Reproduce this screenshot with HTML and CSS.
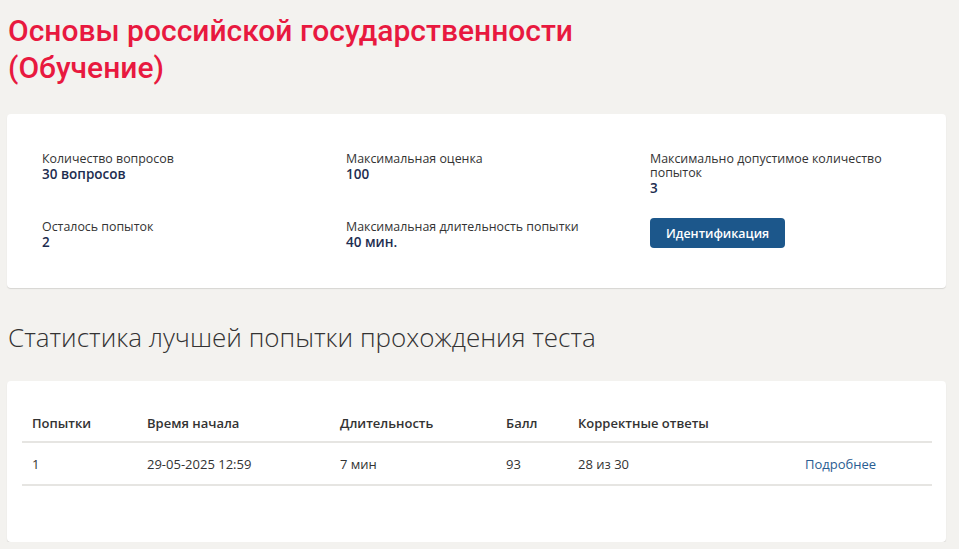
FILE: index.html
```html
<!DOCTYPE html>
<html lang="ru">
<head>
  <meta charset="UTF-8" />
  <meta name="viewport" content="width=device-width, initial-scale=1.0"/>
  <title>Основы российской государственности</title>
  <link rel="stylesheet" href="styles.css">
</head>
<body>

  <!-- Заголовок курса -->
  <h1 class="titul">Основы российской государственности<br>(Обучение)</h1>

  <!-- Параметры теста -->
  <div class="kartochka info">
    <div class="pole">
      <div class="podpis">Количество вопросов</div>
      <div class="znachenie">30 вопросов</div>
    </div>
    <div class="pole">
      <div class="podpis">Максимальная оценка</div>
      <div class="znachenie">100</div>
    </div>
    <div class="pole">
      <div class="podpis">Максимально допустимое количество попыток</div>
      <div class="znachenie">3</div>
    </div>
    <div class="pole">
      <div class="podpis">Осталось попыток</div>
      <div class="znachenie">2</div>
    </div>
    <div class="pole">
      <div class="podpis">Максимальная длительность попытки</div>
      <div class="znachenie">40 мин.</div>
    </div>
    <div class="pole">
      <button class="knopka">Идентификация</button>
    </div>
  </div>

  <h2 class="podzagolovok">Статистика лучшей попытки прохождения теста</h2>

  <!-- Таблица попыток -->
  <div class="kartochka stat">
    <table class="tablica">
      <thead>
        <tr>
          <th class="c1">Попытки</th>
          <th class="c2">Время начала</th>
          <th class="c3">Длительность</th>
          <th class="c4">Балл</th>
          <th class="c5">Корректные ответы</th>
          <th></th>
        </tr>
      </thead>
      <tbody>
        <tr>
          <td>1</td>
          <td>29-05-2025 12:59</td>
          <td>7 мин</td>
          <td>93</td>
          <td>28 из 30</td>
          <td><a href="#">Подробнее</a></td>
        </tr>
      </tbody>
    </table>
  </div>

</body>
</html>
```

FILE: styles.css
```css
* {
  box-sizing: border-box;
}

body {
  margin: 0;
  padding: 12px 13px 0 7px;
  background: #f3f2ef;
  font-family: "Open Sans", sans-serif;
  color: #333;
}

.titul {
  margin: 0 0 28px 1px;
  font-family: Roboto, sans-serif;
  font-weight: 500;
  font-size: 30px;
  line-height: 37px;
  color: #e8193f;
}

.kartochka {
  background: #fff;
  border-radius: 4px;
  box-shadow: 0 1px 1px rgba(0,0,0,0.12);
}

.info {
  display: grid;
  grid-template-columns: 304px 304px 232px;
  row-gap: 24px;
  padding: 38px 35px 38px 35px;
  height: 174px;
}

.podpis {
  font-size: 12.4px;
  line-height: 14px;
  color: #333;
}

.znachenie {
  font-size: 13.5px;
  line-height: 16px;
  font-weight: 600;
  color: #1d2d50;
}

.knopka {
  margin-top: -2px;
  padding: 0 16px;
  height: 30px;
  font-family: "Open Sans", sans-serif;
  font-size: 12.4px;
  font-weight: 600;
  color: #fff;
  background: #1c578b;
  border: none;
  border-radius: 4px;
  cursor: pointer;
}

.podzagolovok {
  margin: 32px 0 27px 1px;
  font-size: 26px;
  font-weight: 300;
  line-height: 34px;
  color: #333;
}

.stat {
  padding: 24px 14px 56px 15px;
}

.tablica {
  width: 100%;
  border-collapse: collapse;
  font-size: 13px;
}

.tablica th,
.tablica td {
  text-align: left;
  padding: 0 10px;
  border-bottom: 2px solid #e6e5e2;
}

.tablica th {
  height: 37px;
  font-weight: 600;
}

.tablica td {
  height: 43px;
}

.c1 { width: 115px; }
.c2 { width: 193px; }
.c3 { width: 166px; }
.c4 { width: 72px; }
.c5 { width: 227px; }

.tablica a {
  color: #2a5d92;
  text-decoration: none;
}
```
